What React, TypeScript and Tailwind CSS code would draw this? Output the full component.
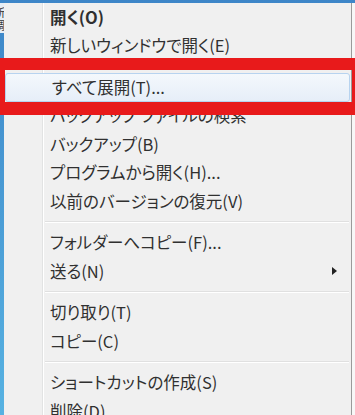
import React from "react";

type Item = { label: string; bold?: boolean; sub?: boolean; hot?: boolean } | "sep";

const items: Item[] = [
  { label: "開く(O)", bold: true },
  { label: "新しいウィンドウで開く(E)" },
  "sep",
  { label: "すべて展開(T)...", hot: true },
  { label: "バックアップ ファイルの検索" },
  { label: "バックアップ(B)" },
  { label: "プログラムから開く(H)..." },
  { label: "以前のバージョンの復元(V)" },
  "sep",
  { label: "フォルダーへコピー(F)..." },
  { label: "送る(N)", sub: true },
  "sep",
  { label: "切り取り(T)" },
  { label: "コピー(C)" },
  "sep",
  { label: "ショートカットの作成(S)" },
  { label: "削除(D)" },
];

export default function App() {
  return (
    <div className="relative w-[355px] h-[415px] overflow-hidden bg-[linear-gradient(to_bottom,#3d86c8,#57b2e2)] font-['Noto_Sans_CJK_JP','Noto_Sans',sans-serif] [font-feature-settings:'palt']">
      <div className="flex h-full pt-[3px]">
        {/* desktop strip */}
        <div className="w-[4px] shrink-0 flex flex-col">
          <div className="h-[30px] bg-[#e6eef6] overflow-hidden text-[11px] leading-[13px] text-[#333] -ml-[6px] pt-[3px]">
            <div>新</div>
            <div>調</div>
          </div>
        </div>

        {/* menu */}
        <div className="w-[348px] shrink-0 border-r border-[#9a9a9a] bg-[linear-gradient(to_right,#f0f0f0_38px,#e2e3e3_38px,#e2e3e3_39px,#ffffff_39px,#ffffff_40px,#f0f0f0_40px)]">
          {items.map((it, i) =>
            it === "sep" ? (
              <div key={i} className="h-[13px] flex flex-col justify-center pl-[41px] pr-[2px]">
                <div className="h-px bg-[#e0e0e0]" />
                <div className="h-px bg-white" />
              </div>
            ) : (
              <div
                key={i}
                className={
                  "h-[28.5px] flex items-center pl-[46px] pr-[14px] text-[16.5px] text-[#303030] " +
                  (it.hot ? "mx-[1px] rounded-[3px] border border-[#b7d3ef] bg-[linear-gradient(to_bottom,#f4f8fc,#e6eef8)] pl-[45px]" : "")
                }
              >
                <span className={it.bold ? "font-bold" : ""}>{it.label}</span>
                {it.sub && (
                  <svg className="ml-auto" width="5" height="8" viewBox="0 0 5 8">
                    <path d="M0 0 L5 4 L0 8 Z" fill="#222" />
                  </svg>
                )}
              </div>
            )
          )}
        </div>
        <div className="flex-1 bg-[#f7f7f7]" />
      </div>

      {/* red annotation frame */}
      <div className="absolute left-0 top-[58px] w-[355px] h-[57px] border-[#e81a1b] border-t-[12px] border-b-[13px] border-l-[5px] border-r-[3px]" />
    </div>
  );
}
